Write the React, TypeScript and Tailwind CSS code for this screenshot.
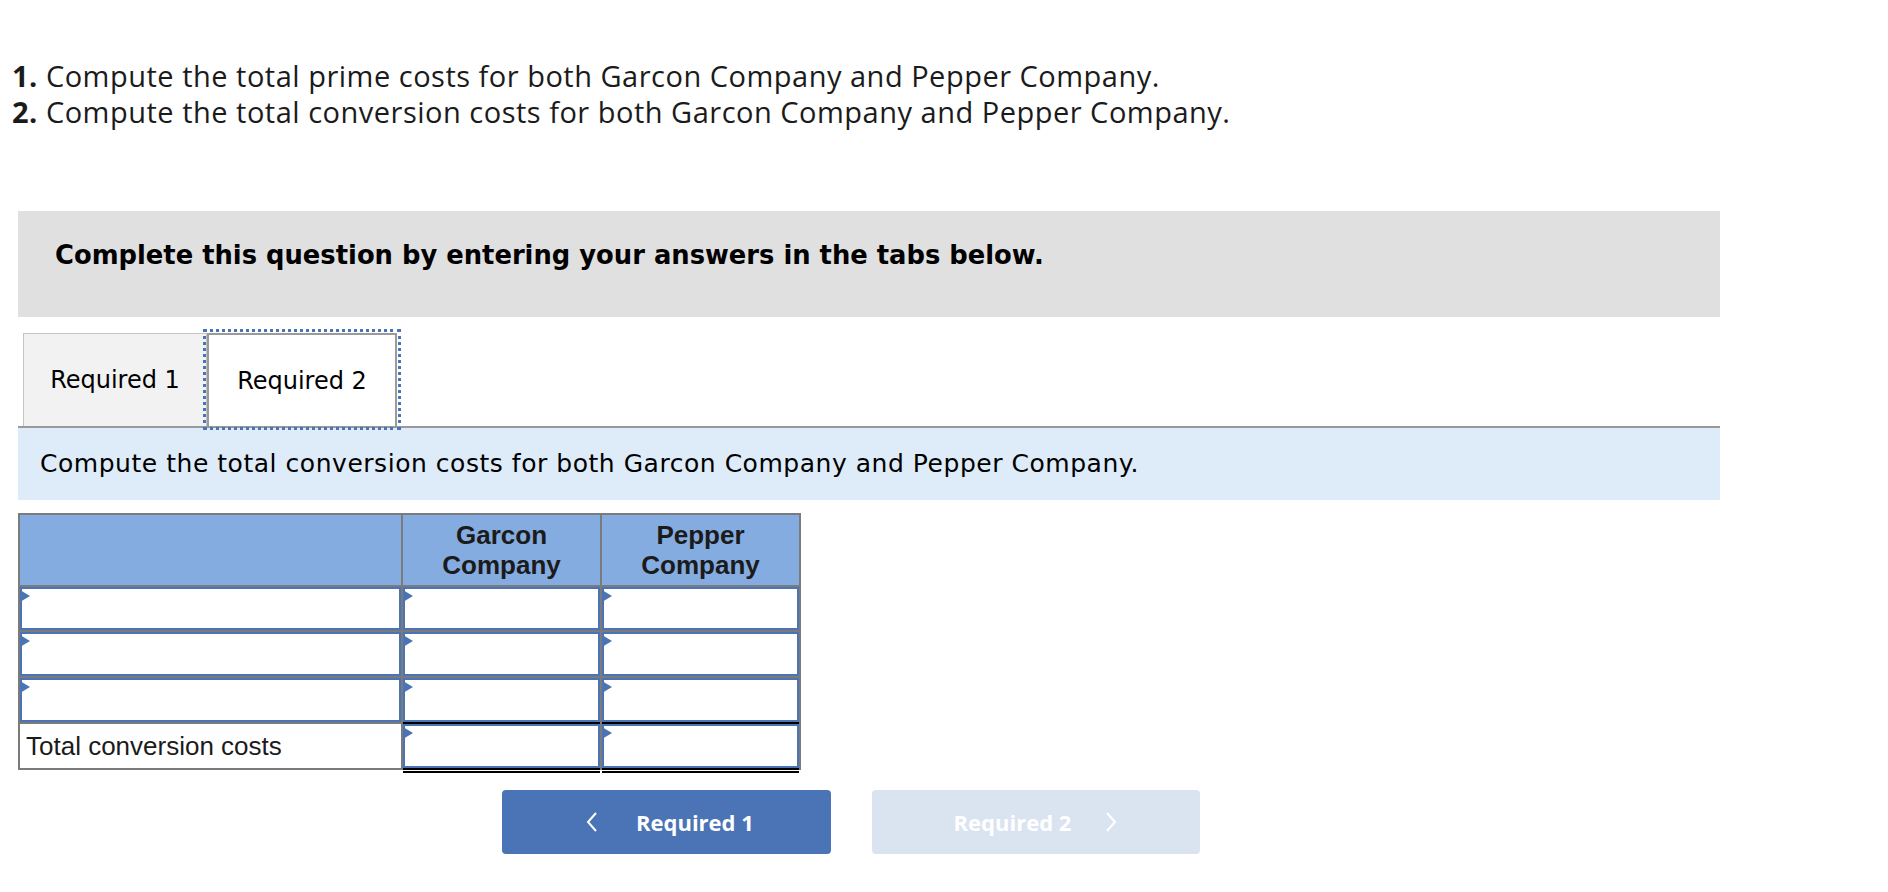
import React from 'react';

const INPUT_ROWS = 3;

// Blue-bordered answer cell with the little dropdown marker in the corner
function InputCell({ underline }: { underline?: 'single' | 'double' }) {
  const shadow =
    underline === 'single'
      ? 'shadow-[0_2px_0_#000]'
      : underline === 'double'
        ? 'shadow-[0_2px_0_#000,0_3px_0_#fff,0_5px_0_#000]'
        : '';
  return (
    <div className={`relative border-2 border-[#4a74b5] bg-white ${shadow}`}>
      <span className="absolute -left-[2px] top-[1px] h-0 w-0 border-y-[6px] border-l-[10px] border-y-transparent border-l-[#4a74b5]" />
    </div>
  );
}

export default function App() {
  return (
    <div className="min-h-screen bg-white text-[#1b1b1b]">
      {/* Question text */}
      <div className="pl-[12px] pt-[58px] font-['Open_Sans',sans-serif] text-[29px] leading-[36px] tracking-[0.5px]">
        <p>
          <span className="font-bold">1.</span> Compute the total prime costs for both Garcon Company and Pepper Company.
        </p>
        <p>
          <span className="font-bold">2.</span> Compute the total conversion costs for both Garcon Company and Pepper Company.
        </p>
      </div>

      <div className="ml-[18px] mt-[81px] w-[1702px]">
        {/* Instructions */}
        <div className="h-[106px] bg-[#e0e0e0] pl-[37px] pt-[28px] font-['DejaVu_Sans','Verdana',sans-serif] text-[25.8px] font-bold leading-[32px] text-black">
          Complete this question by entering your answers in the tabs below.
        </div>

        {/* Tabs */}
        <div className="mt-[16px] flex pl-[5px] font-['DejaVu_Sans','Verdana',sans-serif] text-[24px] text-black">
          <div className="flex h-[93px] w-[184px] items-center justify-center border border-b-0 border-[#c4c4c4] bg-[#f2f2f2]">
            Required 1
          </div>
          <div className="flex h-[93px] w-[190px] items-center justify-center border-2 border-b-0 border-[#9a9a9a] bg-white outline-[3px] outline-offset-[1px] outline-dotted outline-[#4a74b5]">
            Required 2
          </div>
        </div>
        <div className="h-[2px] bg-[#999999]" />
        <div className="flex h-[72px] items-center bg-[#deebf8] pl-[22px] font-['DejaVu_Sans','Verdana',sans-serif] text-[25px] tracking-[0.53px] text-black">
          Compute the total conversion costs for both Garcon Company and Pepper Company.
        </div>

        {/* Answer table */}
        <div className="mt-[13px] grid w-[783px] grid-cols-[381px_197px_197px] grid-rows-[70px_43px_44px_44px_44px] gap-[2px] border-2 border-[#7b7b7b] bg-[#7b7b7b] font-['Liberation_Sans','Arial',sans-serif] text-[26px] text-[#1b1b1b]">
          <div className="bg-[#84ace0]" />
          <div className="flex items-center justify-center bg-[#84ace0] text-center font-bold leading-[30px]">
            Garcon
            <br />
            Company
          </div>
          <div className="flex items-center justify-center bg-[#84ace0] text-center font-bold leading-[30px]">
            Pepper
            <br />
            Company
          </div>

          {Array.from({ length: INPUT_ROWS }).map((_, i) => (
            <React.Fragment key={i}>
              <InputCell />
              <InputCell underline={i === INPUT_ROWS - 1 ? 'single' : undefined} />
              <InputCell underline={i === INPUT_ROWS - 1 ? 'single' : undefined} />
            </React.Fragment>
          ))}

          <div className="flex items-center bg-white pl-[6px]">Total conversion costs</div>
          <InputCell underline="double" />
          <InputCell underline="double" />
        </div>

        {/* Navigation */}
        <div className="mt-[20px] flex gap-[41px] pl-[484px] font-['Open_Sans',sans-serif] text-[22px] font-bold text-white">
          <button className="flex h-[64px] w-[329px] items-center justify-start rounded-[4px] bg-[#4a74b5] pl-[83px]">
            <svg width="14" height="22" viewBox="0 0 14 22" className="mr-[37px]" fill="none" stroke="white" strokeWidth="2">
              <polyline points="11,2 3,11 11,20" />
            </svg>
            Required 1
          </button>
          <button className="flex h-[64px] w-[328px] items-center justify-center rounded-[4px] bg-[#dae4f0]">
            Required 2
            <svg width="14" height="22" viewBox="0 0 14 22" className="ml-[33px]" fill="none" stroke="white" strokeWidth="2">
              <polyline points="3,2 11,11 3,20" />
            </svg>
          </button>
        </div>
      </div>
    </div>
  );
}
